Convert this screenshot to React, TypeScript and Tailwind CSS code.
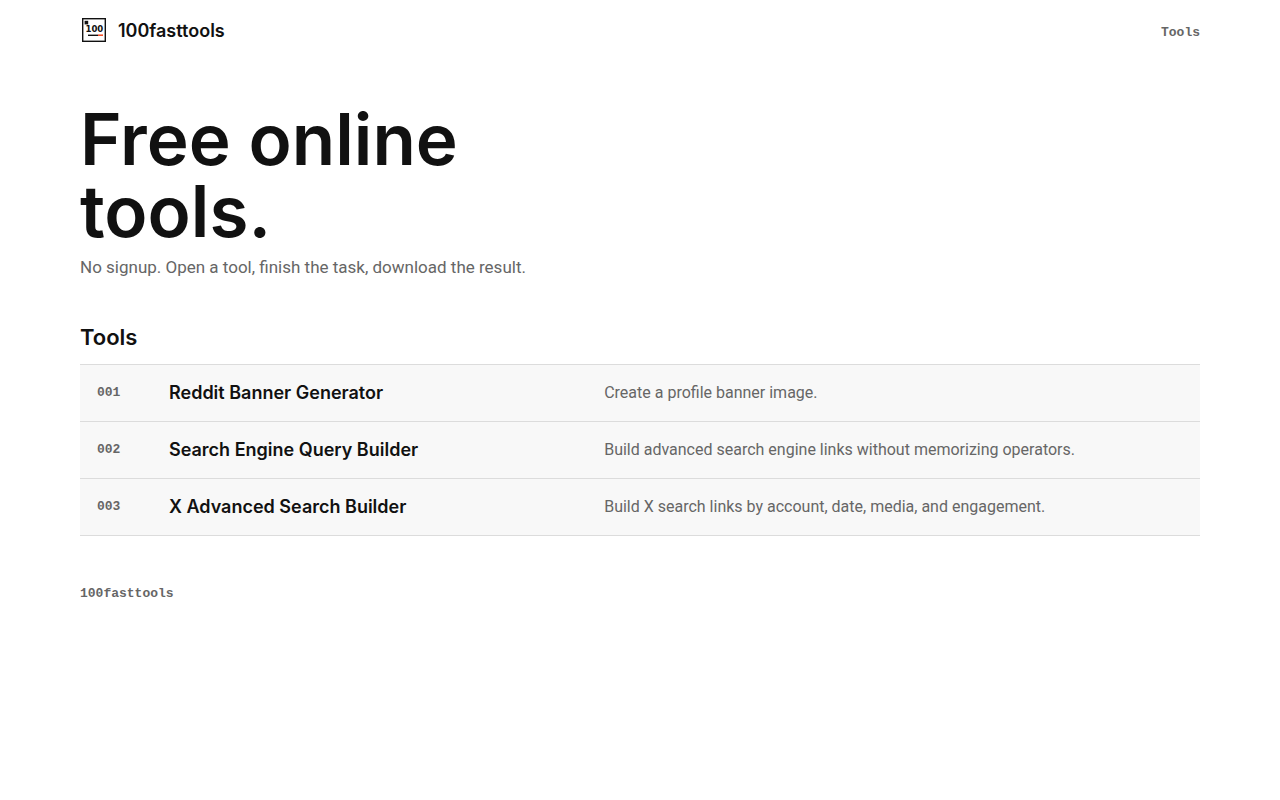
const tools = [
  {
    id: '001',
    name: 'Reddit Banner Generator',
    description: 'Create a profile banner image.',
  },
  {
    id: '002',
    name: 'Search Engine Query Builder',
    description: 'Build advanced search engine links without memorizing operators.',
  },
  {
    id: '003',
    name: 'X Advanced Search Builder',
    description: 'Build X search links by account, date, media, and engagement.',
  },
]

function Logo() {
  return (
    <svg className="size-7" viewBox="0 0 28 28" aria-hidden="true">
      <rect x="2.7" y="2.7" width="22.6" height="22.6" fill="#fff" stroke="#111" strokeWidth="1.4" />
      <rect x="4.6" y="4.8" width="3.6" height="3.6" fill="#111" />
      <text
        x="14.4"
        y="16"
        textAnchor="middle"
        fontFamily="'DejaVu Sans Condensed', 'DejaVu Sans', sans-serif"
        fontWeight="700"
        fontSize="9.5"
        fill="#111"
      >
        100
      </text>
      <rect x="8" y="18.6" width="10" height="1.4" fill="#111" />
      <rect x="18" y="18.4" width="5" height="1.6" fill="#f4512c" />
    </svg>
  )
}

function Header() {
  return (
    <header className="flex h-[60px] items-center justify-between">
      <a href="#" className="flex items-center gap-2.5 text-lg font-semibold">
        <Logo />
        <span className="pt-0.5">100fasttools</span>
      </a>
      <nav className="pt-1.5 font-['Liberation_Mono',monospace] text-[13px] font-bold text-[#666]">
        <a href="#tools">Tools</a>
      </nav>
    </header>
  )
}

function Hero() {
  return (
    <section className="pt-[43px]">
      <h1 className="max-w-[480px] text-[71px] leading-[72px] font-semibold">Free online tools.</h1>
      <p className="mt-1.5 font-['Roboto',sans-serif] text-[17px] leading-7 text-[#666]">
        No signup. Open a tool, finish the task, download the result.
      </p>
    </section>
  )
}

function ToolList() {
  return (
    <section id="tools" className="pt-10">
      <h2 className="text-[22px] leading-8 font-semibold">Tools</h2>
      <ul className="mt-[11px] border-t border-[#dcdcdc]">
        {tools.map((tool) => (
          <li key={tool.id} className="border-b border-[#dcdcdc] bg-[#f8f8f8]">
            <a href={`#${tool.id}`} className="grid min-h-14 grid-cols-[56px_21fr_29fr] items-center gap-4 px-[17px]">
              <span className="font-['Liberation_Mono',monospace] text-[13px] font-bold text-[#666]">{tool.id}</span>
              <span className="text-lg font-semibold">{tool.name}</span>
              <span className="font-['Roboto',sans-serif] text-base text-[#666]">{tool.description}</span>
            </a>
          </li>
        ))}
      </ul>
    </section>
  )
}

function Footer() {
  return (
    <footer className="py-12 font-['Liberation_Mono',monospace] text-[13px] font-bold text-[#666]">
      100fasttools
    </footer>
  )
}

export default function App() {
  return (
    <div className="min-h-screen bg-white px-20 font-['Inter',sans-serif] text-[#111]">
      <Header />
      <main>
        <Hero />
        <ToolList />
      </main>
      <Footer />
    </div>
  )
}
